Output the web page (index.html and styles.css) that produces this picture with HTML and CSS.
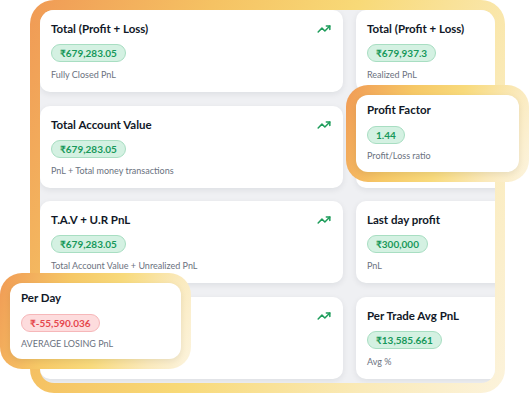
FILE: index.html
```html
<!DOCTYPE html>
<html lang="en">
<head>
    <meta charset="UTF-8">
    <meta name="viewport" content="width=device-width, initial-scale=1.0">
    <title>PnL overview</title>
    <link rel="stylesheet" href="styles.css">
</head>
<body>
    <div class="stage">
        <div class="frame">
            <div class="board">
                <div class="card">
                    <div class="card-head">
                        <h3 class="card-title">Total (Profit + Loss)</h3>
                        <svg class="trend" viewBox="0 0 24 24"><polyline points="22 7 13.5 15.5 8.5 10.5 2 17"/><polyline points="16 7 22 7 22 13"/></svg>
                    </div>
                    <span class="pill">₹679,283.05</span>
                    <p class="card-note">Fully Closed PnL</p>
                </div>
                <div class="card">
                    <div class="card-head">
                        <h3 class="card-title">Total (Profit + Loss)</h3>
                        <svg class="trend" viewBox="0 0 24 24"><polyline points="22 7 13.5 15.5 8.5 10.5 2 17"/><polyline points="16 7 22 7 22 13"/></svg>
                    </div>
                    <span class="pill">₹679,937.3</span>
                    <p class="card-note">Realized PnL</p>
                </div>

                <div class="card">
                    <div class="card-head">
                        <h3 class="card-title">Total Account Value</h3>
                        <svg class="trend" viewBox="0 0 24 24"><polyline points="22 7 13.5 15.5 8.5 10.5 2 17"/><polyline points="16 7 22 7 22 13"/></svg>
                    </div>
                    <span class="pill">₹679,283.05</span>
                    <p class="card-note">PnL + Total money transactions</p>
                </div>
                <!-- slot of the lifted Profit Factor card -->
                <div class="card"></div>

                <div class="card">
                    <div class="card-head">
                        <h3 class="card-title">T.A.V + U.R PnL</h3>
                        <svg class="trend" viewBox="0 0 24 24"><polyline points="22 7 13.5 15.5 8.5 10.5 2 17"/><polyline points="16 7 22 7 22 13"/></svg>
                    </div>
                    <span class="pill">₹679,283.05</span>
                    <p class="card-note">Total Account Value + Unrealized PnL</p>
                </div>
                <div class="card">
                    <div class="card-head">
                        <h3 class="card-title">Last day profit</h3>
                    </div>
                    <span class="pill">₹300,000</span>
                    <p class="card-note">PnL</p>
                </div>

                <!-- slot of the lifted Per Day card -->
                <div class="card">
                    <div class="card-head card-head-end">
                        <svg class="trend" viewBox="0 0 24 24"><polyline points="22 7 13.5 15.5 8.5 10.5 2 17"/><polyline points="16 7 22 7 22 13"/></svg>
                    </div>
                </div>
                <div class="card">
                    <div class="card-head">
                        <h3 class="card-title">Per Trade Avg PnL</h3>
                    </div>
                    <span class="pill">₹13,585.661</span>
                    <p class="card-note">Avg %</p>
                </div>
            </div>
        </div>

        <!-- highlighted cards, lifted above the grid -->
        <div class="spot spot-factor">
            <div class="card card-lift">
                <h3 class="card-title">Profit Factor</h3>
                <span class="pill">1.44</span>
                <p class="card-note">Profit/Loss ratio</p>
            </div>
        </div>

        <div class="spot spot-day">
            <div class="card card-lift">
                <h3 class="card-title">Per Day</h3>
                <span class="pill pill-loss">₹-55,590.036</span>
                <p class="card-note">AVERAGE LOSING PnL</p>
            </div>
        </div>
    </div>
</body>
</html>
```

FILE: styles.css
```css
/* Base */
body {
    margin: 0;
    padding: 0;
    background-color: #ffffff;
    font-family: 'Lato', 'Noto Sans', sans-serif;
    color: #111827;
}

.stage {
    position: relative;
    width: 529px;
    height: 395px;
    overflow: hidden;
}

/* Gradient frame */
.frame {
    margin-left: 30px;
    width: 475px;
    height: 393px;
    padding: 10px;
    box-sizing: border-box;
    border-radius: 24px;
    background: linear-gradient(115deg, #f09a55 0%, #f5c263 28%, #f8d977 50%, #faeab8 78%, #fcf3dc 100%);
}

.board {
    height: 100%;
    border-radius: 14px;
    overflow: hidden;
    background-color: #eff0f3;
    display: grid;
    grid-template-columns: 303px 303px;
    grid-auto-rows: 82px;
    gap: 13.5px 13px;
}

/* Cards */
.card {
    background-color: #ffffff;
    border-radius: 10px;
    box-shadow: 0 2px 6px rgba(17, 24, 39, 0.08);
    padding: 11px 12px 0 11px;
    box-sizing: border-box;
    display: flex;
    flex-direction: column;
    align-items: flex-start;
}

.card-head {
    width: 100%;
    min-height: 16px;
    display: flex;
    justify-content: space-between;
    align-items: center;
}

.card-head-end {
    justify-content: flex-end;
}

.card-title {
    margin: 0;
    font-size: 11.5px;
    line-height: 16px;
    font-weight: 700;
    color: #111827;
}

.trend {
    width: 14px;
    height: 14px;
    fill: none;
    stroke: #1f9d5c;
    stroke-width: 2.6;
    stroke-linecap: round;
    stroke-linejoin: round;
}

.pill {
    margin-top: 7px;
    height: 18px;
    line-height: 16px;
    padding: 0 8px;
    box-sizing: border-box;
    border: 1px solid #a8dec2;
    border-radius: 9px;
    background-color: #d4f1e2;
    color: #17985a;
    font-size: 10px;
    font-weight: 700;
}

.pill-loss {
    border-color: #f6b7b9;
    background-color: #fddcdd;
    color: #e5484d;
}

.card-note {
    margin: 6px 0 0;
    font-size: 9px;
    line-height: 14px;
    color: #6b7280;
}

/* Highlighted cards */
.spot {
    position: absolute;
    padding: 10px;
    box-sizing: border-box;
    border-radius: 22px;
    background: linear-gradient(110deg, #f09a55 0%, #f6c866 32%, #f8da7c 55%, #fae9bb 80%, #fcf4df 100%);
}

.spot-factor {
    left: 346px;
    top: 85px;
    width: 183px;
    height: 97px;
}

.spot-day {
    left: 0;
    top: 273px;
    width: 191px;
    height: 96px;
}

.card-lift {
    height: 100%;
    border-radius: 12px;
    padding-top: 7px;
}

.card-lift .pill {
    margin-top: 8px;
}

.card-lift .card-note {
    margin-top: 5px;
}
```
